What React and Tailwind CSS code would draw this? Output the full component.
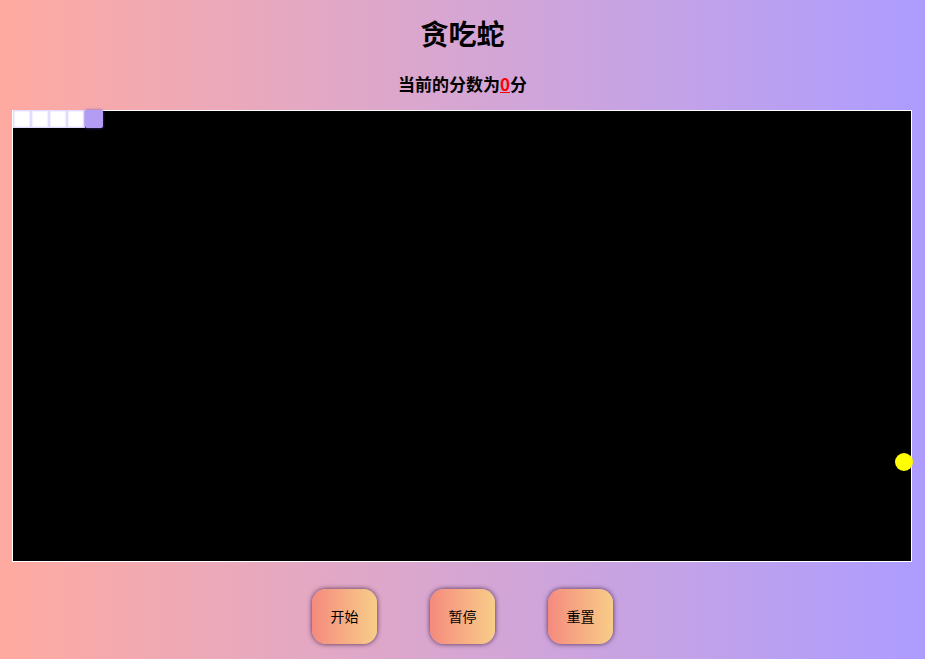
const CELL = 18;

const snake = [
  { x: 0, y: 0 },
  { x: 1, y: 0 },
  { x: 2, y: 0 },
  { x: 3, y: 0 },
  { x: 4, y: 0, head: true },
];

const food = { x: 49, y: 19 };

const App = () => {
  return (
    <div
      className="min-h-[659px] w-full flex flex-col items-center bg-gradient-to-r from-[#ffaaa0] to-[#ad9cff]"
      style={{ fontFamily: '"Noto Sans CJK SC", "Noto Sans", sans-serif' }}
    >
      <h1 className="mt-[14px] text-[28px] leading-[38px] font-bold text-black">贪吃蛇</h1>
      <p className="mt-[22px] text-[17px] leading-[20px] font-bold text-black">
        当前的分数为<span className="text-[#ff0000] underline">0</span>分
      </p>

      <div className="relative self-start ml-[12px] mt-[16px] w-[900px] h-[452px] border border-white bg-black">
        {snake.map((s, i) => (
          <div
            key={i}
            className={
              s.head
                ? "absolute w-[18px] h-[18px] bg-[#b39cf3] rounded-[2px] shadow-[0_0_3px_rgba(90,70,200,0.8)]"
                : "absolute w-[18px] h-[18px] bg-white border border-[#e2dbff] shadow-[inset_0_0_2px_#d8cfff]"
            }
            style={{ left: s.x * CELL, top: s.y * CELL - 1 }}
          />
        ))}
        <div
          className="absolute w-[18px] h-[18px] rounded-full bg-[#ffff00]"
          style={{ left: food.x * CELL, top: food.y * CELL }}
        />
      </div>

      <div className="mt-[27px] flex gap-[53px]">
        {["开始", "暂停", "重置"].map((t) => (
          <button
            key={t}
            className="w-[65px] h-[55px] rounded-[14px] bg-gradient-to-r from-[#f48a7e] to-[#f7cd88] text-[14px] text-black shadow-[0_0_5px_rgba(50,20,50,0.85)]"
          >
            {t}
          </button>
        ))}
      </div>
    </div>
  );
};

export default App;
